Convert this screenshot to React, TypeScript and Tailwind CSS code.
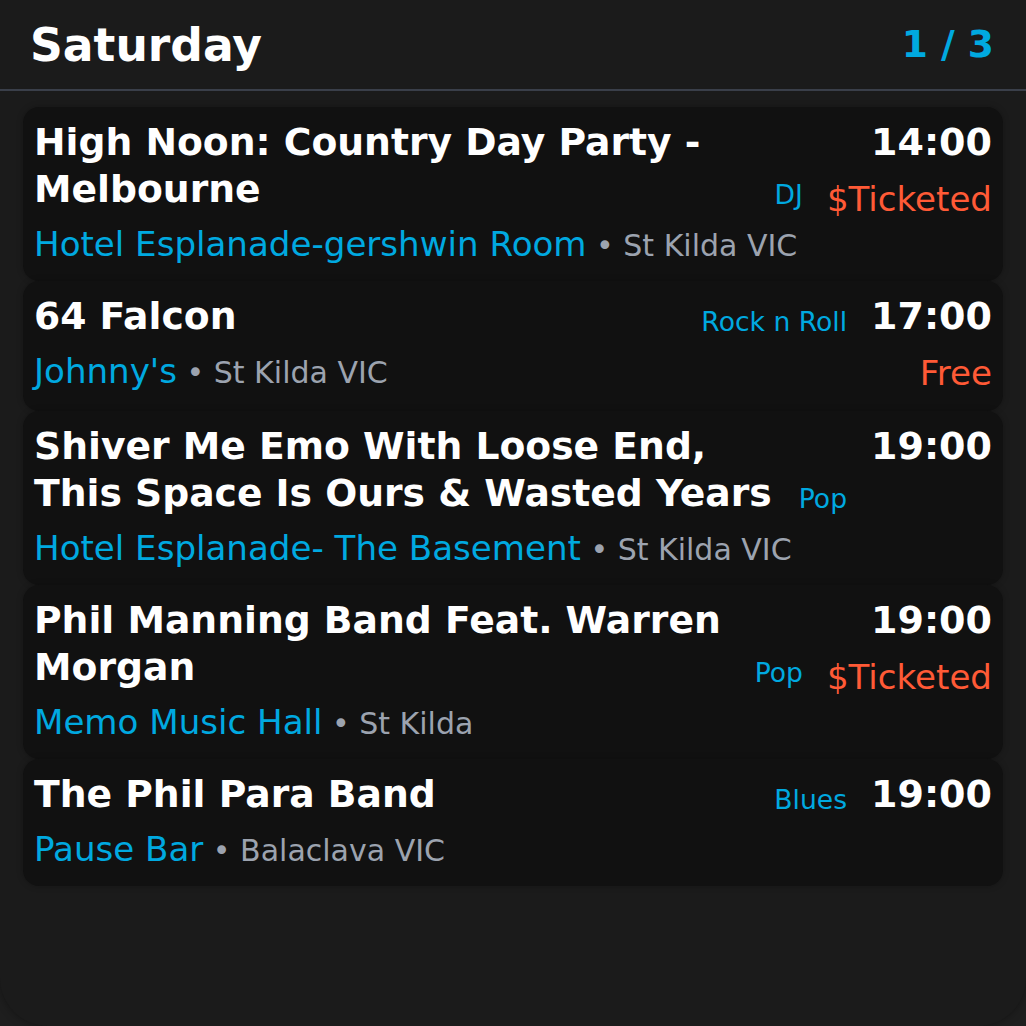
import React from "react";

type Gig = {
  title: string;
  genre: string;
  time: string;
  price?: string;
  venue: string;
  suburb: string;
};

const gigs: Gig[] = [
  {
    title: "High Noon: Country Day Party - Melbourne",
    genre: "DJ",
    time: "14:00",
    price: "$Ticketed",
    venue: "Hotel Esplanade-gershwin Room",
    suburb: "St Kilda VIC",
  },
  {
    title: "64 Falcon",
    genre: "Rock n Roll",
    time: "17:00",
    price: "Free",
    venue: "Johnny's",
    suburb: "St Kilda VIC",
  },
  {
    title: "Shiver Me Emo With Loose End, This Space Is Ours & Wasted Years",
    genre: "Pop",
    time: "19:00",
    venue: "Hotel Esplanade- The Basement",
    suburb: "St Kilda VIC",
  },
  {
    title: "Phil Manning Band Feat. Warren Morgan",
    genre: "Pop",
    time: "19:00",
    price: "$Ticketed",
    venue: "Memo Music Hall",
    suburb: "St Kilda",
  },
  {
    title: "The Phil Para Band",
    genre: "Blues",
    time: "19:00",
    venue: "Pause Bar",
    suburb: "Balaclava VIC",
  },
];

function GigCard({ gig }: { gig: Gig }) {
  return (
    <div className="flex gap-[24px] rounded-[16px] bg-[#111111] pt-[12px] pb-[13px] pl-[11px] pr-[11px] shadow-[0_0_6px_rgba(0,0,0,0.25)]">
      <div className="flex min-w-0 flex-1 flex-col gap-[7px]">
        <div className="flex items-end gap-[24px]">
          <h3 className="flex-1 text-[37.7px] font-bold leading-[47px] text-white">{gig.title}</h3>
          <span className="shrink-0 text-[26.6px] leading-[37.5px] text-[#00a9e0]">{gig.genre}</span>
        </div>
        <div className="flex items-baseline text-[34.1px] leading-[48px]">
          <span className="text-[#00a9e0]">{gig.venue}</span>
          <span className="whitespace-pre text-[30px] leading-[40px] text-[#9ca3af]"> • {gig.suburb}</span>
        </div>
      </div>
      <div className="flex shrink-0 flex-col items-end gap-[8px]">
        <span className="text-[38px] font-bold leading-[47px] text-white">{gig.time}</span>
        {gig.price && (
          <span className="text-[34.1px] leading-[50px] text-[#ff5a36]">{gig.price}</span>
        )}
      </div>
    </div>
  );
}

export default function App() {
  return (
    <div className="h-[1026px] w-[1026px] bg-[#1e1e1e] font-['DejaVu_Sans',sans-serif]">
      <div className="flex h-full flex-col rounded-b-[48px] bg-[#1b1b1b] shadow-[0_0_8px_rgba(0,0,0,0.35)]">
        <header className="flex h-[91px] shrink-0 items-center justify-between border-b-2 border-[#3a3f4a] pl-[30px] pr-[32px]">
          <h1 className="pt-[3px] text-[45.6px] font-bold leading-none text-white">Saturday</h1>
          <span className="text-[37.6px] font-bold leading-none text-[#00a9e0]">1 / 3</span>
        </header>
        <div className="flex flex-col px-[23px] pt-[16px]">
          {gigs.map((g, i) => (
            <GigCard key={i} gig={g} />
          ))}
        </div>
      </div>
    </div>
  );
}
